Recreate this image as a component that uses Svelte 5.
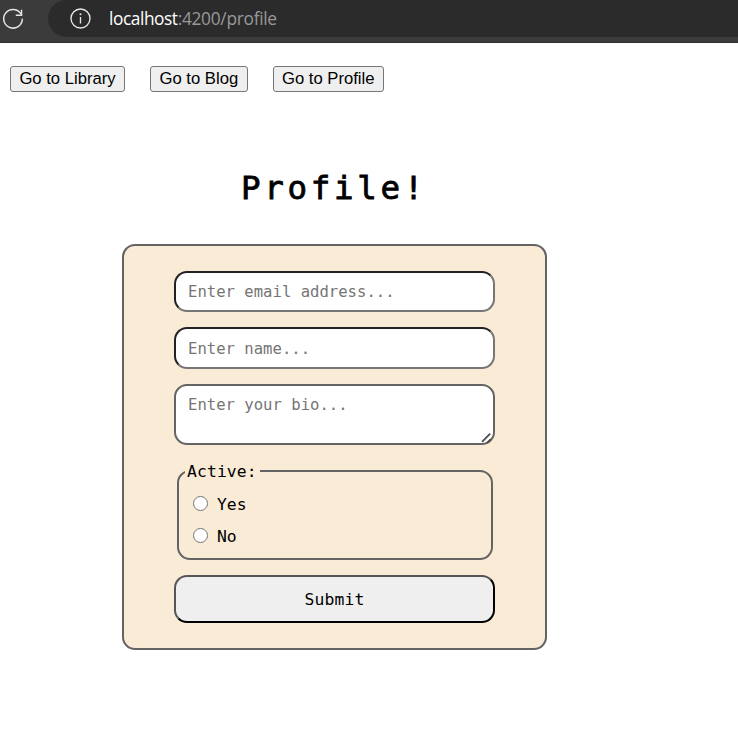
<script>
  const links = ['Library', 'Blog', 'Profile'];
</script>

<div class="page">
  <header class="browser">
    <svg class="reload" width="24" height="24" viewBox="0 0 24 24" fill="none" stroke="#e6e6e6" stroke-width="1.5">
      <path d="M19.6 7.4A9.3 9.3 0 1 0 21.3 13.2" stroke-linecap="round" />
      <path d="M20.5 3.8V9.2H14.8" />
    </svg>
    <div class="address">
      <svg width="22" height="22" viewBox="0 0 22 22" fill="none" stroke="#e6e6e6" stroke-width="1.35">
        <circle cx="10.5" cy="10.5" r="9.5" />
        <path d="M10.5 9V15.5" />
        <circle cx="10.5" cy="6.3" r="1" fill="#e6e6e6" stroke="none" />
      </svg>
      <span class="url"><span class="host">localhost</span><span class="path">:4200/profile</span></span>
    </div>
  </header>

  <nav>
    {#each links as link}
      <button type="button">Go to {link}</button>
    {/each}
  </nav>

  <main>
    <h1>Profile!</h1>
    <form>
      <input class="email" type="text" placeholder="Enter email address..." />
      <input class="name" type="text" placeholder="Enter name..." />
      <div class="bio">
        <textarea placeholder="Enter your bio..."></textarea>
        <svg class="grip" width="12" height="12" viewBox="0 0 12 12" fill="none" stroke="#484848" stroke-width="1.7">
          <path d="M1 9.8L9.2 1.6M6 10.8L9.8 7" />
        </svg>
      </div>
      <fieldset>
        <legend>Active:</legend>
        <label><input type="radio" name="active" />Yes</label>
        <label><input type="radio" name="active" />No</label>
      </fieldset>
      <button class="submit" type="button">Submit</button>
    </form>
  </main>
</div>

<style>
  .page {
    height: 735px;
    overflow: hidden;
    background: #fff;
    color: #000;
  }
  .browser {
    box-sizing: border-box;
    height: 43px;
    display: flex;
    align-items: flex-start;
    background: #3b3b3b;
    border-bottom: 1px solid #303030;
  }
  .reload {
    flex: none;
    margin: 6px 23px 0 1px;
  }
  .address {
    flex: 1;
    height: 37px;
    display: flex;
    align-items: center;
    box-sizing: border-box;
    padding-left: 22px;
    background: #2b2b2b;
    border-radius: 19px 0 0 19px;
  }
  .address svg {
    flex: none;
    margin-right: 17px;
  }
  .url {
    padding-top: 1px;
    font: 17.3px/24px "Open Sans", sans-serif;
    white-space: nowrap;
  }
  .host {
    color: #fff;
    letter-spacing: -0.42px;
  }
  .path {
    color: #999;
    letter-spacing: -0.27px;
  }
  nav {
    display: flex;
    gap: 25px;
    padding: 23px 10px 0;
  }
  nav button {
    box-sizing: border-box;
    height: 26px;
    padding: 0 8.4px 1px;
    border: 1px solid #767676;
    border-radius: 3px;
    background: #efefef;
    color: #000;
    font: 16.67px/22px "Liberation Sans", Arial, sans-serif;
    white-space: nowrap;
  }
  main {
    width: 425px;
    margin: 70px 0 0 122px;
    font-family: "DejaVu Sans Mono", monospace;
  }
  h1 {
    margin: 0;
    height: 82px;
    box-sizing: border-box;
    padding: 1px 0 0 119px;
    font-size: 32.5px;
    font-weight: 400;
    -webkit-text-stroke: 0.8px #000;
    line-height: 50px;
    letter-spacing: 3.7px;
    white-space: nowrap;
  }
  form {
    box-sizing: border-box;
    height: 406px;
    padding: 25px 50px;
    display: flex;
    flex-direction: column;
    background: #faebd7;
    border: 2px solid #646464;
    border-radius: 13px;
  }
  form > input,
  textarea {
    box-sizing: border-box;
    width: 321px;
    margin: 0 0 15px;
    padding: 0 12px;
    background: #fff;
    border: 2px solid;
    border-color: #212121 #767676 #767676 #212121;
    border-radius: 13px;
    font: 15.6px/24px "DejaVu Sans Mono", monospace;
    letter-spacing: 0;
    outline: none;
  }
  .email {
    height: 41px;
  }
  form > .name {
    height: 42px;
    padding-top: 2px;
  }
  ::placeholder {
    color: #757575;
    opacity: 1;
  }
  .bio {
    position: relative;
    height: 61px;
    margin-bottom: 15px;
  }
  textarea {
    display: block;
    height: 61px;
    margin: 0;
    padding-top: 7px;
    border-color: #646464;
    resize: none;
    overflow: hidden;
  }
  .grip {
    position: absolute;
    right: 2px;
    bottom: 1px;
  }
  fieldset {
    box-sizing: border-box;
    width: 316px;
    height: 100px;
    margin: 0 3px 15px;
    padding: 7px 13px 0;
    border: 2px solid #646464;
    border-radius: 13px;
    font-size: 16.4px;
    line-height: 24px;
  }
  legend {
    height: 22px;
    line-height: 24px;
    margin-left: -7px;
    padding: 0 3px 0 2px;
    letter-spacing: 0.1px;
  }
  label {
    display: flex;
    align-items: center;
    height: 32px;
  }
  label input {
    appearance: none;
    box-sizing: border-box;
    width: 15px;
    height: 15px;
    margin: 0 9px 4px 1px;
    border: 1px solid #767676;
    border-radius: 50%;
    background: #fff;
  }
  .submit {
    box-sizing: border-box;
    width: 321px;
    height: 48px;
    padding: 2px 0 0;
    background: #efefef;
    color: #000;
    border: 2px solid;
    border-color: #555 #000 #000 #555;
    border-radius: 13px;
    font: 16.4px/24px "DejaVu Sans Mono", monospace;
    letter-spacing: 0.1px;
  }
</style>
